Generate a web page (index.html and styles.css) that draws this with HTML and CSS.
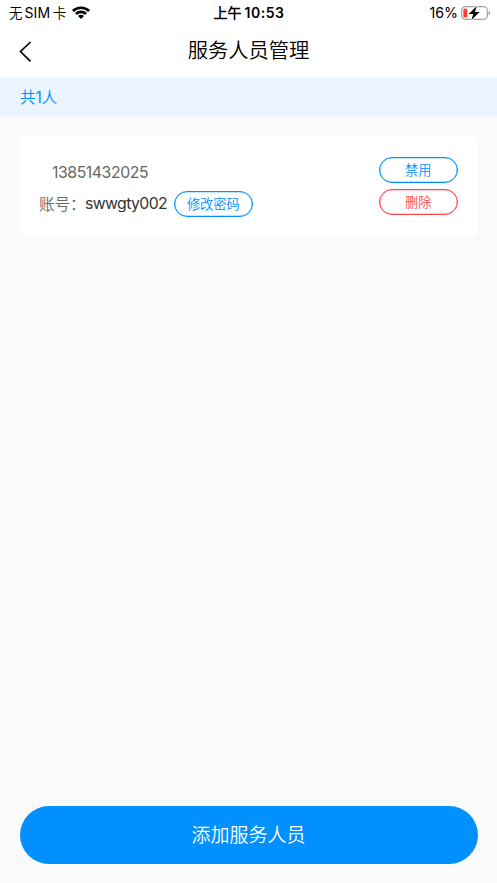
FILE: index.html
```html
<!DOCTYPE html>
<html lang="zh-CN">
<head>
<meta charset="utf-8">
<title>服务人员管理</title>
<link rel="stylesheet" href="styles.css">
</head>
<body>
<div class="app">
  <div class="status">
    <div class="carrier"><span>无</span><span class="sim">SIM</span><span>卡</span>
      <svg class="wifi" width="18" height="13" viewBox="0 0 18 13"><path d="M0 4.100a12.800 12.800 0 0 1 18 0L16.100 6a10 10 0 0 0-14.200 0Z"/><path d="M3 7.100a8.500 8.500 0 0 1 12 0L13.100 9a5.800 5.800 0 0 0-8.200 0Z"/><path d="M6 10.100a4.200 4.200 0 0 1 6 0L9 13Z"/></svg>
    </div>
    <div class="clock"><span>上午</span><span class="time">10:53</span></div>
    <div class="power"><span>16%</span>
      <svg width="30" height="16" viewBox="0 0 30 16"><rect x=".6" y="1.700" width="25.800" height="12.600" rx="3.800" fill="#fff" stroke="#a2a2a2" stroke-width="1.200"/><path d="M27.700 5.600c2 .8 2 4 0 4.800Z" fill="#a2a2a2"/><rect x="2.300" y="3.500" width="4" height="9" rx="1.500" fill="#ff3b30"/><path d="M15.800 1 7.700 9h4.600l-2 6.200L18.500 7h-4.600Z" fill="#000" stroke="#fff" stroke-width="1.600" paint-order="stroke"/></svg>
    </div>
  </div>
  <header class="nav">
    <svg class="back" width="14" height="22" viewBox="0 0 14 22"><path d="M12.500 1 2.500 10.500l10 9.800"/></svg>
    <h1>服务人员管理</h1>
  </header>
  <div class="count">共<span class="num">1</span>人</div>
  <main>
    <section class="card">
      <div class="info">
        <div class="phone">13851432025</div>
        <div class="account"><span class="label">账号：</span><span class="user">swwgty002</span><button class="pill">修改密码</button></div>
      </div>
      <div class="actions"><button class="pill">禁用</button><button class="pill danger">删除</button></div>
    </section>
  </main>
  <footer><button class="add">添加服务人员</button></footer>
</div>
</body>
</html>
```
FILE: styles.css
```css
* { box-sizing: border-box; }
body { margin: 0; background: #fafafa; font-family: Inter, "Noto Sans CJK SC DemiLight", "Noto Sans CJK SC", sans-serif; font-weight: 350; color: #000; }
button { font: inherit; margin: 0; padding: 0; }
.app { height: 883px; display: flex; flex-direction: column; }
.status { height: 26px; background: #fff; display: grid; grid-template-columns: 1fr auto 1fr; align-items: center; padding: 0 6px 0 9px; font-size: 14px; font-weight: 400; line-height: 26px; white-space: nowrap; }
.carrier { display: flex; align-items: center; font-size: 13.500px; }
.sim { margin: 0 2.500px 0 2px; letter-spacing: .1px; font-size: 14px; }
.wifi { margin: -2px 0 0 6px; }
.clock { display: flex; gap: 3px; margin-left: -2px; font-weight: 600; font-size: 14px; }
.time { letter-spacing: .5px; }
.power { display: flex; align-items: center; justify-content: flex-end; gap: 3px; font-size: 14.200px; }
.nav { height: 51px; background: #fff; display: grid; grid-template-columns: 40px 1fr 40px; align-items: center; }
.back { margin-left: 18px; fill: none; stroke: #000; stroke-width: 1.700; }
h1 { margin: 0; font-size: 20.300px; line-height: 28px; padding-bottom: 2px; font-weight: 350; text-align: center; }
.count { height: 40px; background: #ebf5ff; color: #0090ff; padding-left: 20px; font-size: 15.500px; line-height: 41px; }
.num { font-weight: 400; }
main { flex: 1; padding: 19px 19.500px 0; }
.card { height: 100px; padding: 21px 19.500px 0; background: #fff; border-radius: 7px; display: flex; justify-content: space-between; }
.phone { padding-left: 13px; height: 33px; line-height: 31px; font-size: 15.800px; font-weight: 400; letter-spacing: -.43px; color: #666; }
.account { height: 28px; display: flex; align-items: center; font-size: 15.500px; }
.label { color: #666; width: 46px; margin-top: -3px; white-space: nowrap; }
.user { color: #333; width: 82px; margin-top: -2px; font-size: 15.800px; font-weight: 400; letter-spacing: -.6px; margin-right: 6.500px; }
.pill { width: 79.500px; height: 26px; border: 1px solid #0090ff; border-radius: 13px; box-shadow: inset 0 0 0 .3px #0090ff; background: #fff; color: #0090ff; font-size: 13.200px; line-height: 24px; }
.actions { display: flex; flex-direction: column; gap: 6.400px; }
.danger { border-color: #fa4350; box-shadow: inset 0 0 0 .3px #fa4350; color: #fa4350; }
footer { padding: 0 19.500px 19.500px; }
.add { display: block; width: 100%; height: 57.500px; padding-bottom: 3px; border: 0; border-radius: 29px; background: #0090ff; color: #fff; font-size: 19px; }
```
